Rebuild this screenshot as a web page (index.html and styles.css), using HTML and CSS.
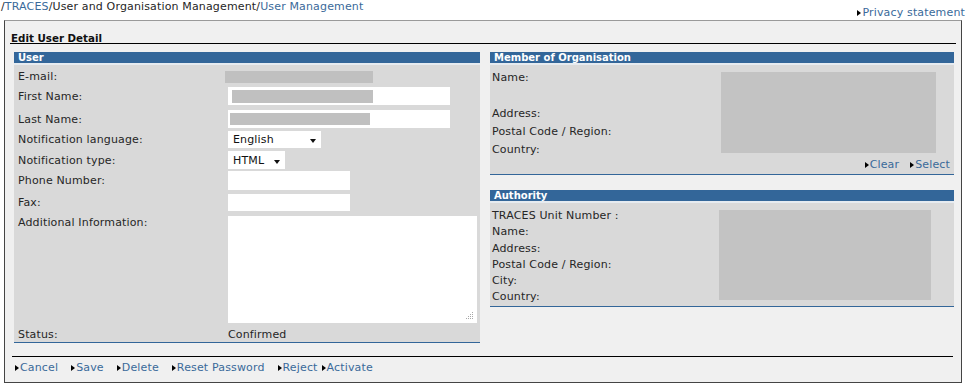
FILE: index.html
```html
<!DOCTYPE html>
<html lang="en">
<head>
<meta charset="utf-8">
<title>Edit User Detail</title>
<link rel="stylesheet" href="styles.css">
</head>
<body>
<div class="topbar">
  <div class="crumbs">/<a href="#">TRACES</a>/User and Organisation Management/<a href="#">User Management</a></div>
  <a class="privacy" href="#"><span class="tri"></span>Privacy statement</a>
</div>
<div class="frame">
  <div class="title">Edit User Detail</div>
  <div class="cols">
    <section class="user">
      <h2 class="ph">User</h2>
      <div class="pb ub">
        <div class="frow r-email"><span class="lbl">E-mail:</span><span class="redact rd-email"></span></div>
        <div class="frow r-first"><span class="lbl">First Name:</span><div class="input in-name"><span class="redact rd-first"></span></div></div>
        <div class="frow r-last"><span class="lbl">Last Name:</span><div class="input in-name"><span class="redact rd-last"></span></div></div>
        <div class="frow r-lang"><span class="lbl">Notification language:</span><div class="select sel-lang"><span>English</span><span class="arrow"></span></div></div>
        <div class="frow r-type"><span class="lbl">Notification type:</span><div class="select sel-type"><span>HTML</span><span class="arrow"></span></div></div>
        <div class="frow r-phone"><span class="lbl">Phone Number:</span><div class="input in-short"></div></div>
        <div class="frow r-fax"><span class="lbl">Fax:</span><div class="input in-short"></div></div>
        <div class="frow r-info"><span class="lbl">Additional Information:</span>
          <div class="textarea"><svg class="grip" width="8" height="8" viewBox="0 0 8 8"><g fill="#a8a8a8"><rect x="6" y="0" width="1" height="1"/><rect x="4" y="2" width="1" height="1"/><rect x="6" y="2" width="1" height="1"/><rect x="2" y="4" width="1" height="1"/><rect x="4" y="4" width="1" height="1"/><rect x="6" y="4" width="1" height="1"/><rect x="0" y="6" width="1" height="1"/><rect x="2" y="6" width="1" height="1"/><rect x="4" y="6" width="1" height="1"/><rect x="6" y="6" width="1" height="1"/></g></svg></div>
        </div>
        <div class="frow r-status"><span class="lbl">Status:</span><span>Confirmed</span></div>
      </div>
    </section>
    <div class="side">
      <section class="member">
        <h2 class="ph">Member of Organisation</h2>
        <div class="pb mb">
          <div class="lcol">
            <div class="l-name">Name:</div>
            <div>Address:</div>
            <div>Postal Code / Region:</div>
            <div>Country:</div>
          </div>
          <div class="grey mbox"></div>
          <div class="links"><a href="#"><span class="tri"></span>Clear</a><a href="#"><span class="tri"></span>Select</a></div>
        </div>
      </section>
      <section class="authority">
        <h2 class="ph">Authority</h2>
        <div class="pb ab">
          <div class="acol">
            <div>TRACES Unit Number :</div>
            <div>Name:</div>
            <div>Address:</div>
            <div>Postal Code / Region:</div>
            <div>City:</div>
            <div>Country:</div>
          </div>
          <div class="grey abox"></div>
        </div>
      </section>
    </div>
  </div>
  <div class="actions">
    <a href="#"><span class="tri"></span>Cancel</a>
    <a href="#"><span class="tri"></span>Save</a>
    <a href="#"><span class="tri"></span>Delete</a>
    <a href="#"><span class="tri"></span>Reset Password</a>
    <a href="#" class="tight"><span class="tri"></span>Reject</a>
    <a href="#"><span class="tri"></span>Activate</a>
  </div>
</div>
</body>
</html>
```

FILE: styles.css
```css
* { box-sizing: border-box; }
html, body { margin: 0; background: #fff; }
body {
  font-family: "DejaVu Sans", Verdana, sans-serif;
  font-size: 11px;
  letter-spacing: 0.15px;
  color: #262626;
  width: 971px;
  height: 389px;
  overflow: hidden;
}
a { color: #3a6a9a; text-decoration: none; }

.tri {
  display: inline-block;
  width: 0; height: 0;
  border-left: 4px solid #000;
  border-top: 3.5px solid transparent;
  border-bottom: 3.5px solid transparent;
  margin-right: 1px;
}

.topbar { display: flex; justify-content: space-between; height: 20px; }
.crumbs { padding-left: 1px; line-height: 13px; }
.privacy { margin-top: 6px; margin-right: 6px; line-height: 13px; height: 13px; display: flex; align-items: center; }

.frame {
  margin-left: 4px;
  width: 958px;
  border: 1px solid #444;
  border-top-color: #9a9a9a;
  background: #f0f0f0;
  padding: 12px 5px 8px 5px;
}
.title {
  font-weight: bold;
  font-size: 10.3px;
  letter-spacing: 0;
  line-height: 10px;
  border-bottom: 1px solid #000;
  padding-left: 1px;
  color: #111;
}

.cols { display: flex; align-items: flex-start; gap: 10px; margin-top: 8px; padding-left: 4px; }
.user { width: 466px; }
.side { width: 464px; }

.ph {
  margin: 0;
  height: 13px;
  padding-left: 4px;
  font-size: 10px;
  font-weight: bold;
  letter-spacing: 0;
  line-height: 11px;
  color: #fff;
  background: #336699;
  border-bottom: 2px solid #e6ebf0;
}
.pb { background: #d9d9d9; border-bottom: 1px solid #336699; }

/* user form */
.ub { padding: 5px 0 2px 4px; }
.frow { display: flex; align-items: center; }
.lbl { width: 210px; flex: none; line-height: 11px; }
.r-email { height: 13px; }
.r-first { margin-top: 4px; height: 18px; }
.r-last { margin-top: 5px; height: 18px; }
.r-lang { margin-top: 3px; height: 17px; }
.r-type { margin-top: 3px; height: 18px; }
.r-phone { margin-top: 2px; height: 19px; }
.r-fax { margin-top: 4px; height: 17px; }
.r-info { margin-top: 5px; height: 107px; align-items: flex-start; }
.r-info .lbl { padding-top: 1px; }
.r-status { margin-top: 5px; height: 12px; }

.redact { display: block; background: #c0c0c0; }
.rd-email { width: 148px; height: 12px; margin-left: -3px; }
.rd-first { width: 141px; height: 13px; margin-top: 1px; }
.rd-last { width: 140px; height: 12px; margin-left: -2px; margin-top: -1px; }

.input { background: #fff; height: 100%; display: flex; align-items: center; padding-left: 4px; }
.in-name { width: 222px; }
.in-short { width: 122px; }

.select { background: #fff; height: 100%; display: flex; align-items: center; justify-content: space-between; padding: 0 5px; color: #111; }
.sel-lang { width: 93px; }
.sel-type { width: 57px; }
.arrow { width: 0; height: 0; border-top: 4px solid #111; border-left: 3px solid transparent; border-right: 3px solid transparent; margin-top: 3px; }

.textarea { width: 249px; height: 107px; background: #fff; display: flex; align-items: flex-end; justify-content: flex-end; padding: 0 3px 3px 0; }

/* member */
.mb { display: grid; grid-template-columns: 229px 215px 1fr; padding: 4px 0 3px 2px; }
.lcol > div { line-height: 18px; }
.lcol .l-name { height: 36px; }
.grey { background: #c3c3c3; }
.mbox { margin-top: 3px; height: 81px; }
.links { grid-column: 1 / -1; justify-self: end; margin-right: 4px; line-height: 12px; display: flex; gap: 11px; }
.links a, .actions a, .privacy { display: inline-flex; align-items: center; }

/* authority */
.authority { margin-top: 15px; }
.ab { display: grid; grid-template-columns: 227px 212px 1fr; padding: 5px 0 0 2px; }
.acol > div { line-height: 16.3px; }
.abox { margin-top: 2px; height: 90px; }

/* actions */
.actions {
  margin: 13px 3px 0 2px;
  border-top: 1px solid #000;
  padding: 5px 0 0 3px;
  line-height: 12px;
  display: flex;
}
.actions a { margin-right: 13px; }
.actions a.tight { margin-right: 4px; }
```
